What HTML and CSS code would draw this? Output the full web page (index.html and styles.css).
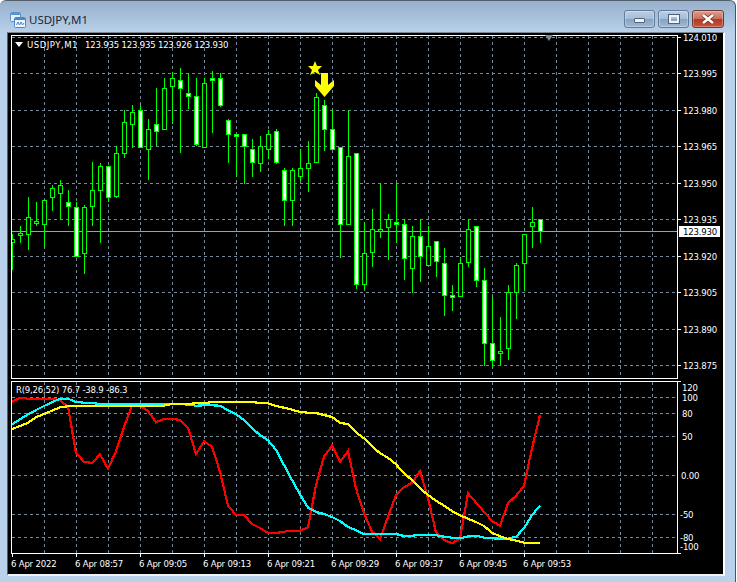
FILE: index.html
```html
<!DOCTYPE html>
<html lang="en">
<head>
  <meta charset="UTF-8">
  <title>USDJPY,M1</title>
  <link rel="stylesheet" href="styles.css">
</head>
<body>

<div class="window">
  <div class="titlebar">
    <svg class="app-icon" width="16" height="16" viewBox="0 0 16 16">
      <rect x="0.5" y="0.5" width="10" height="9" rx="1" fill="#e4f0fb" stroke="#5f93c8"/>
      <rect x="1" y="1" width="9" height="2" fill="#5f93c8"/>
      <rect x="4.5" y="5.5" width="11" height="10" rx="1" fill="#eef6fd" stroke="#4f86c0"/>
      <rect x="5" y="6" width="10" height="2" fill="#4f86c0"/>
      <path d="M6.5 13 L8 10 L9.5 13 L11 10 L12.5 13 L14 11" fill="none" stroke="#4f86c0"/>
    </svg>
    <span class="title">USDJPY,M1</span>
    <div class="controls">
      <div class="ctl"><span class="ico-min"></span></div>
      <div class="ctl"><span class="ico-max"></span></div>
      <div class="ctl ctl-close">
        <svg width="14" height="10" viewBox="0 0 14 10">
          <path d="M2 1 L12 9 M12 1 L2 9" stroke="#6b2b20" stroke-width="4"/>
          <path d="M2 1 L12 9 M12 1 L2 9" stroke="#fff" stroke-width="2.6"/>
        </svg>
      </div>
    </div>
  </div>

  <div class="chart-wrap">
    <!-- viewBox uses page coordinates so numbers can be read straight off the screenshot -->
    <svg id="chart" class="chart" width="716" height="541" viewBox="8 33 716 541">
      <g id="grid"></g>
      <g id="candles"></g>
      <g id="lines"></g>
      <g id="frame"></g>

      <polygon class="mark-tri" points="545,35 553,35 549,41"/>
      <polygon class="mark-yellow" points="315,61 317,66 322,66 318,70 320,75 315,72 310,75 312,70 308,66 313,66"/>
      <path class="mark-yellow" d="M321 73 H328 V85 L334 80 V86 L324.5 97 L315 86 V80 L321 85 Z"/>

      <polygon class="legend-tri" points="15,42 23,42 19,47"/>
      <text class="lbl lbl-sym" x="27" y="48">USDJPY,M1</text>
      <text class="lbl" x="85" y="48">123.935 123.935 123.926 123.930</text>
      <text class="lbl" x="16" y="393">R(9,26,52) 76.7 -38.9 -86.3</text>

      <text class="lbl" x="683" y="41">124.010</text>
      <text class="lbl" x="683" y="77">123.995</text>
      <text class="lbl" x="683" y="114">123.980</text>
      <text class="lbl" x="683" y="150">123.965</text>
      <text class="lbl" x="683" y="187">123.950</text>
      <text class="lbl" x="683" y="223">123.935</text>
      <text class="lbl" x="683" y="260">123.920</text>
      <text class="lbl" x="683" y="296">123.905</text>
      <text class="lbl" x="683" y="333">123.890</text>
      <text class="lbl" x="683" y="369">123.875</text>

      <rect class="price-box" x="679" y="226" width="41" height="11"/>
      <text class="lbl lbl-dark" x="683" y="235">123.930</text>

      <text class="lbl" x="682" y="391">120</text>
      <text class="lbl" x="682" y="401">100</text>
      <text class="lbl" x="682" y="417">80</text>
      <text class="lbl" x="682" y="440">50</text>
      <text class="lbl" x="681" y="479">0.00</text>
      <text class="lbl" x="680" y="518">-50</text>
      <text class="lbl" x="680" y="541">-80</text>
      <text class="lbl" x="680" y="550">-100</text>

      <text class="lbl" x="11" y="567">6 Apr 2022</text>
      <text class="lbl" x="75" y="567">6 Apr 08:57</text>
      <text class="lbl" x="139" y="567">6 Apr 09:05</text>
      <text class="lbl" x="203" y="567">6 Apr 09:13</text>
      <text class="lbl" x="267" y="567">6 Apr 09:21</text>
      <text class="lbl" x="331" y="567">6 Apr 09:29</text>
      <text class="lbl" x="395" y="567">6 Apr 09:37</text>
      <text class="lbl" x="459" y="567">6 Apr 09:45</text>
      <text class="lbl" x="523" y="567">6 Apr 09:53</text>
    </svg>
  </div>
</div>

<script src="chart.js"></script>
</body>
</html>
```

FILE: styles.css
```css
body {
  margin: 0;
  background: #fff;
}

.window {
  width: 735px;
  height: 581px;
  display: flex;
  flex-direction: column;
  border-top: 1px solid #55606c;
  border-right: 1px solid #3d566f;
  border-radius: 6px 6px 0 0;
  background: linear-gradient(to bottom, #97b1cd, #b9d1ea 32px);
}

.titlebar {
  height: 31px;
  display: flex;
  align-items: flex-start;
  padding: 0 11px 0 10px;
}

.app-icon {
  margin-top: 11px;
}

.title {
  margin: 11px 0 0 3px;
  font-family: "Noto Sans", sans-serif;
  font-size: 11.5px;
  line-height: 16px;
  color: #1d2738;
}

.controls {
  margin-left: auto;
  margin-top: 9px;
  display: flex;
  gap: 3px;
}

.ctl {
  width: 29px;
  height: 16px;
  display: flex;
  align-items: center;
  justify-content: center;
  border: 1px solid #63799a;
  border-radius: 3px;
  background: linear-gradient(to bottom, #bccfe3, #a3bcd6 50%, #84a3c3 52%, #a0bad4);
  box-shadow: inset 0 0 0 1px rgba(255,255,255,0.3);
}

.ctl-close {
  width: 30px;
  border-color: #6b3a35;
  background: linear-gradient(to bottom, #dc9c8e, #c9705e 48%, #b33a26 52%, #c9523c);
}

.ico-min {
  width: 9px;
  height: 3px;
  margin-top: 3px;
  background: #eef3f8;
  border: 1px solid #51617a;
  border-radius: 1px;
}

.ico-max {
  width: 6px;
  height: 4px;
  border: 2px solid #eef3f8;
  outline: 1px solid #51617a;
}

.chart-wrap {
  flex: 1;
  margin: 0 10px 6px 7px;
  border-left: 1px solid #5a5f66;
  border-top: 1px solid #7d8794;
  border-right: 2px solid #fff;
  border-bottom: 2px solid #eef1f4;
  background: #000;
}

.chart {
  display: block;
}

.lbl {
  font-family: "DejaVu Sans Condensed", "Liberation Sans", sans-serif;
  font-size: 9.5px;
  letter-spacing: -0.2px;
  fill: #fff;
}

.lbl-sym {
  letter-spacing: 0.5px;
}

.lbl-dark {
  fill: #000;
}

.price-box {
  fill: #fff;
}

.mark-tri {
  fill: #778899;
}

.legend-tri {
  fill: #fff;
}

.mark-yellow {
  fill: #ffff00;
}
```

FILE: chart.js
```js
const NS = "http://www.w3.org/2000/svg";

// x, wick top, wick bottom, body top, body bottom, filled
const candles = [
  [12,234,269,239,242,0],[20,226,242,233,235,0],[28,197,249,217,234,0],[36,202,225,221,223,0],
  [44,200,247,200,224,0],[52,185,210,188,197,0],[60,180,218,185,193,0],[68,190,225,202,206,1],
  [76,202,256,207,256,1],[84,205,273,207,253,0],[92,162,225,190,206,0],[100,163,242,166,190,0],
  [108,166,201,166,197,1],[116,146,197,153,196,0],[124,110,157,122,153,0],[132,105,147,112,124,0],
  [140,105,147,110,147,1],[148,119,179,129,149,0],[156,88,145,124,131,1],[164,78,129,88,129,0],
  [172,72,123,78,86,0],[180,68,152,80,88,1],[188,73,108,93,96,1],[196,78,145,96,144,1],
  [204,78,147,83,147,0],[212,71,132,78,80,1],[220,73,106,78,105,1],[228,119,162,120,134,1],
  [236,134,176,134,136,1],[244,134,183,134,146,1],[252,139,176,149,162,1],[260,136,171,146,163,0],
  [268,130,158,134,149,0],[276,129,163,131,162,1],[284,168,225,170,200,1],[292,168,225,170,200,0],
  [300,149,180,168,176,0],[308,141,191,163,168,0],[316,93,162,97,162,0],[324,100,150,105,129,1],
  [332,110,149,129,149,1],[340,147,257,147,224,1],[348,110,224,156,224,0],[356,153,288,153,284,1],
  [364,222,289,253,284,0],[372,209,266,229,252,0],[380,183,237,229,231,0],[388,214,259,219,227,0],
  [396,183,242,222,224,1],[404,219,279,224,258,1],[412,226,292,236,268,0],[420,219,281,236,256,1],
  [428,226,265,246,265,0],[436,241,276,241,261,1],[444,248,315,263,295,1],[452,285,310,295,297,1],
  [460,257,296,263,296,0],[468,219,266,229,262,0],[476,226,286,226,280,1],[484,268,365,280,343,1],
  [492,297,367,343,360,1],[500,317,364,351,353,0],[508,285,359,292,348,0],[516,263,318,265,292,0],
  [524,234,290,234,263,0],[532,207,247,222,226,0],[540,219,242,219,231,1]
];

// indicator lines, one y per bar starting at x = 12
const red = [401.7,397.7,398.7,398.7,398.7,398.7,400.3,406.7,453,461.7,463,454.3,468.7,451.3,426.7,405.7,405.7,411,422.3,419,418.7,420,427.7,454,441.3,446.7,471.7,505.7,515,515,524,528,533,533,531.7,530.7,530.7,527.3,485,456.7,445.7,462,451,488.3,513.3,531.7,539,516.7,495,487.3,482.7,471,498.3,532.3,540,543.3,538.3,493.3,502.7,511.7,521,525.7,503.3,495.7,485.7,448.3,415];
const cyan = [424.3,419.3,414.3,410,406,402.3,398.7,398.7,402,402.7,403,404,404,404,404,404,404,404,404,404,404,404,404.7,405.7,405.3,405.3,405.7,410.3,414.3,420,428.3,435,440.3,450,465,480,494.3,507.7,512,514,517,521,527,530.3,534.3,534.3,534.3,534,534,536,535.7,535,535,535.3,536.7,537.7,538.3,536.3,535.7,537.7,538.3,538.7,538.7,536.7,528.3,515,505.7];
const yellow = [429,426,422.7,417.3,414,410.7,407.3,406.3,406.3,406.3,406.3,406.3,406.3,406.3,406.3,406.3,406.3,406.3,406.3,405.7,404,404,404,403.3,403.3,402,402,402,402,402,402,403,403.3,406,407.7,409.7,412,412.7,413,415,417,422.7,424.3,432.3,438.3,446,453.3,457.7,464.3,473.3,480,488.3,495,500.7,505.7,511,515.3,518.7,522,526,532.7,536.3,539,540.7,542.7,543,543];

function el(parent, tag, attrs) {
  const n = document.createElementNS(NS, tag);
  for (const k in attrs) n.setAttribute(k, attrs[k]);
  parent.appendChild(n);
  return n;
}

function box(parent, x, y, w, h, fill) {
  el(parent, "rect", { x: x, y: y, width: w, height: h, fill: fill, "shape-rendering": "crispEdges" });
}

function hGrid(g, y) {
  el(g, "line", { x1: 12, x2: 677, y1: y + 0.5, y2: y + 0.5, stroke: "#778899", "stroke-dasharray": "3 3" });
}

function vGrid(g, x, y1, y2) {
  el(g, "line", { x1: x + 0.5, x2: x + 0.5, y1: y1, y2: y2, stroke: "#778899", "stroke-dasharray": "3 3" });
}

const grid = document.getElementById("grid");
[37,73,110,146,183,219,256,292,329,365, 397,413,436,475,514,537].forEach(y => hGrid(grid, y));
for (let x = 44; x <= 652; x += 32) {
  vGrid(grid, x, 36, 378);
  vGrid(grid, x, 382, 553);
}
box(grid, 12, 231, 665, 1, "#a0a0a0");

const cg = document.getElementById("candles");
candles.forEach(c => {
  const [x, wt, wb, bt, bb, filled] = c;
  box(cg, x, wt, 1, wb - wt + 1, "#00ff00");
  const left = x === 12 ? 12 : x - 2;
  const w = x === 12 ? 3 : 5;
  box(cg, left, bt, w, bb - bt + 1, "#00ff00");
  box(cg, left + (x === 12 ? 0 : 1), bt + 1, w - (x === 12 ? 1 : 2), Math.max(bb - bt - 1, 0), filled ? "#fff" : "#000");
});

const lg = document.getElementById("lines");
[[red, "#ff0000"], [cyan, "#00ffff"], [yellow, "#ffff00"]].forEach(l => {
  const pts = l[0].map((y, i) => (12 + i * 8) + "," + y).join(" ");
  el(lg, "polyline", { points: pts, fill: "none", stroke: l[1], "stroke-width": 2.2, "shape-rendering": "crispEdges" });
});

// pane borders and axis ticks
const fr = document.getElementById("frame");
[[35, 378], [381, 553]].forEach(p => {
  box(fr, 11, p[0], 667, 1, "#fff");
  box(fr, 11, p[1], 667, 1, "#fff");
  box(fr, 11, p[0], 1, p[1] - p[0], "#fff");
  box(fr, 677, p[0], 1, p[1] - p[0], "#fff");
});
[37,73,110,146,183,219,256,292,329,365, 381,553].forEach(y => box(fr, 678, y, 3, 1, "#fff"));
for (let x = 12; x <= 524; x += 64) box(fr, x, 554, 1, 3, "#fff");
```
